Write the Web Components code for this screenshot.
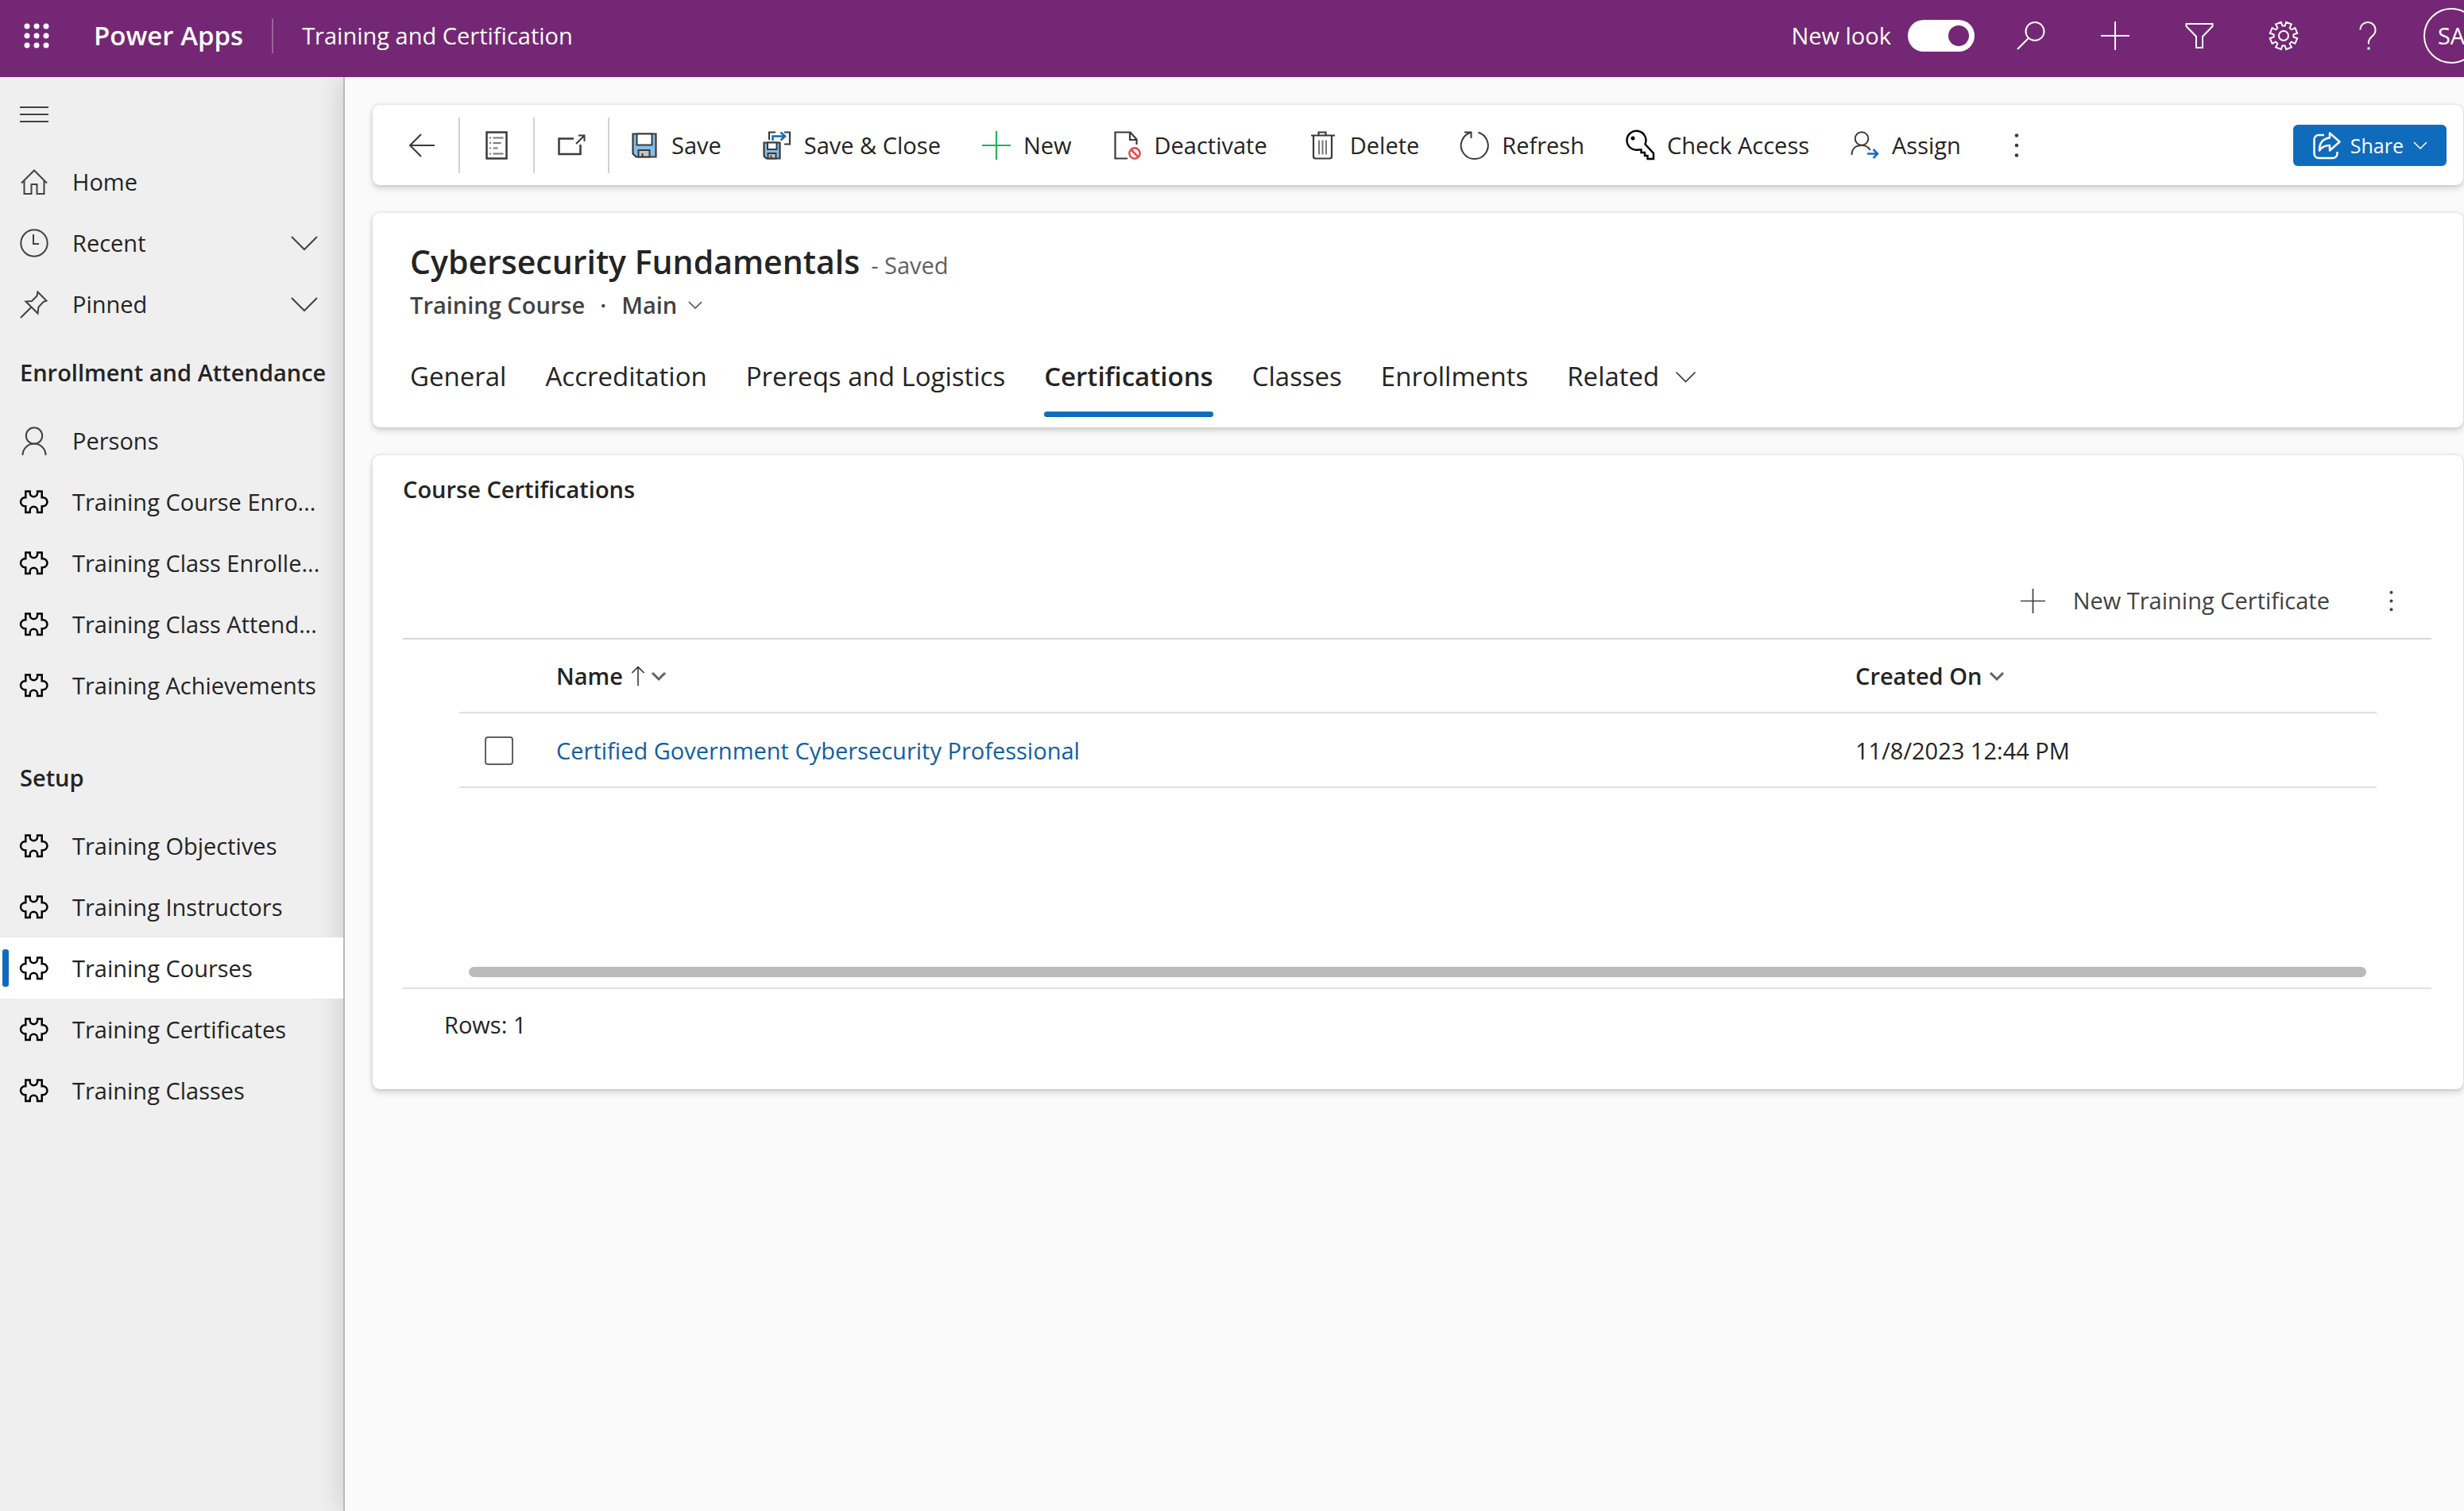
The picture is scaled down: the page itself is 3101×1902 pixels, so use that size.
<!DOCTYPE html>
<html lang="en">
<head>
<meta charset="utf-8">
<title>Training and Certification - Power Apps</title>
<style>
    :root {
        --brand: #742774;
        --primary: #0f6cbd;
        --link: #115ea3;
        --text: #242424;
        --text-soft: #424242;
        --text-muted: #616161;
        --line: #e0e0e0;
        --size-s: 25px;
        --size-m: 29px;
        --size-l: 33px;
        --size-xl: 41px;
    }
    body {
        margin: 0;
        background: #fafafa;
        color: var(--text);
        font: var(--size-m)/42px "Segoe UI", "Open Sans", "Noto Sans", sans-serif;
    }
</style>
</head>
<body>
<app-shell>
    <app-header slot="header" product="Power Apps" app="Training and Certification"></app-header>

    <side-nav slot="nav">
        <nav-item icon="home">Home</nav-item>
        <nav-item icon="clock" expandable>Recent</nav-item>
        <nav-item icon="pin" expandable>Pinned</nav-item>
        <nav-group heading="Enrollment and Attendance">
            <nav-item icon="person">Persons</nav-item>
            <nav-item icon="puzzle">Training Course Enro...</nav-item>
            <nav-item icon="puzzle">Training Class Enrolle...</nav-item>
            <nav-item icon="puzzle">Training Class Attend...</nav-item>
            <nav-item icon="puzzle">Training Achievements</nav-item>
        </nav-group>
        <nav-group heading="Setup">
            <nav-item icon="puzzle">Training Objectives</nav-item>
            <nav-item icon="puzzle">Training Instructors</nav-item>
            <nav-item icon="puzzle" active>Training Courses</nav-item>
            <nav-item icon="puzzle">Training Certificates</nav-item>
            <nav-item icon="puzzle">Training Classes</nav-item>
        </nav-group>
    </side-nav>

    <app-card>
        <command-bar>
            <command-button icon="back" label="Back" compact></command-button>
            <command-button icon="form" label="Open record set" compact></command-button>
            <command-button icon="popout" label="Open in new window" compact></command-button>
            <command-button icon="save">Save</command-button>
            <command-button icon="saveclose">Save &amp; Close</command-button>
            <command-button icon="add">New</command-button>
            <command-button icon="deactivate">Deactivate</command-button>
            <command-button icon="trash">Delete</command-button>
            <command-button icon="refresh">Refresh</command-button>
            <command-button icon="key">Check Access</command-button>
            <command-button icon="assign">Assign</command-button>
            <command-button icon="more" label="More commands"></command-button>
            <share-button slot="end">Share</share-button>
        </command-bar>
    </app-card>

    <app-card>
        <record-header name="Cybersecurity Fundamentals" status="- Saved" entity="Training Course" form="Main">
            <record-tab>General</record-tab>
            <record-tab>Accreditation</record-tab>
            <record-tab>Prereqs and Logistics</record-tab>
            <record-tab selected>Certifications</record-tab>
            <record-tab>Classes</record-tab>
            <record-tab>Enrollments</record-tab>
            <record-tab menu>Related</record-tab>
        </record-header>
    </app-card>

    <app-card>
        <sub-grid heading="Course Certifications" action="New Training Certificate"></sub-grid>
    </app-card>
</app-shell>

<script>
// outline of the settings gear, 8 teeth with a gap at the top
function gearPath() {
    const pts = [];
    for (let i = 0; i < 8; i++) {
        const a = i * 45 + 22.5;
        [[-15, 12.5], [-12, 17.5], [12, 17.5], [15, 12.5]].forEach(([d, r]) => {
            const t = (a + d) * Math.PI / 180;
            pts.push((18 + r * Math.sin(t)).toFixed(1) + ' ' + (18 - r * Math.cos(t)).toFixed(1));
        });
    }
    return 'M' + pts.join('L') + 'Z';
}

// all icons share a 36 x 36 box
const ICONS = {
    waffle: [6, 18, 30].map(y => [6, 18, 30].map(x => `<circle cx="${x}" cy="${y}" r="3.5" fill="currentColor" stroke="none"/>`).join('')).join(''),
    menu: '<path d="M0 9h36M0 18h36M0 27h36"/>',
    home: '<path d="M2 19.5 18 3.5l16 16M5.5 16.5V33h9V21h7v12h9V16.5"/>',
    clock: '<circle cx="18" cy="18" r="16.7"/><path d="M17 7v12h7"/>',
    pin: '<path d="M22.5 2.5 33.5 13.5l-4 1.5-6 6.5-1 8-15-15 7.5-.5 6.5-6.5zM14 22 1 35"/>',
    person: '<circle cx="18" cy="11.5" r="10.2"/><path d="M3.5 36a14.5 14.5 0 0 1 29 0"/>',
    puzzle: '<path stroke="#000" stroke-width="2.5" d="M7.3 4.5H12.7V6.5a4.7 4.7 0 0 0 9.4 0V4.5H27.7V12.2H29a5.5 5.5 0 0 1 0 11H27.7V31H22.1V28.5a4.7 4.7 0 0 0-9.4 0V31H7.3V23.2H6.5a5.5 5.5 0 0 1 0-11H7.3Z"/>',
    chevron: '<path d="M2 10l16 16 16-16"/>',
    search: '<circle cx="23" cy="12.5" r="11.5"/><path d="M15 21 1 35"/>',
    plus: '<path d="M18 0v36M0 18h36"/>',
    filter: '<path d="M1.5 3h33v3L22 19v14h-8V19L1.5 6z"/>',
    gear: `<path d="${gearPath()}"/><circle cx="18" cy="18" r="6"/>`,
    help: '<path d="M8.5 10.5a9.5 9.5 0 1 1 16.5 6.5c-3 3-6 5-6 9v2.5"/><path d="M17.5 34h3" stroke-width="3"/>',
    back: '<path d="M17 4 3 18l14 14M3 18h31"/>',
    form: '<path stroke-width="2.5" d="M5.5 1.5h25v33h-25z"/><path stroke="#777" d="M9 8.5h2M13.5 8.5h13M9 15h2M13.5 15h10M9 21.5h2M13.5 21.5h6M9 28.5h2M13.5 28.5h13"/>',
    popout: '<path stroke-width="2.5" d="M21 9.5H2.5V29h27V17"/><path d="M24 16 34 6M27 5.5h7.5V13"/>',
    save: '<path fill="#83beec" stroke-width="2.2" d="M3.5 3.5h29v29H7.5l-4-4z"/><path fill="#fff" d="M8.5 3.5h19v14h-19z"/><path fill="#c8c6c4" d="M10.5 24h14v8.5h-14z"/><path d="M15.5 28v5"/>',
    saveclose: '<path stroke-width="2.2" d="M8 11V1.5h8M27 1.5h7v15h-7"/><path stroke="#0f6cbd" stroke-width="2.5" d="M12.5 12V6.5H27M22.5 1.5l5.5 5-5.5 5"/><path fill="#83beec" stroke-width="2.2" d="M1.5 14.5h20v20h-17l-3-3z"/><path fill="#fff" d="M6 14.5h11.5V23H6z"/><path fill="#c8c6c4" d="M6.5 28h10v6.5h-10z"/><path d="M10.5 30.5v4"/>',
    add: '<path stroke="#27ae60" stroke-width="2.2" d="M18 0v36M0 18h36"/>',
    deactivate: '<path stroke-width="2.2" d="M18 34.5H2.5v-33h19l8 9V17M21 1.5v9.5h9"/><circle cx="27" cy="28" r="6.7" stroke="#e8484c" stroke-width="2.5"/><path stroke="#e8484c" stroke-width="2.5" d="M22.5 23.5l9 9"/>',
    trash: '<path stroke-width="2.2" d="M3 5.5h30M12.5 5V1.5h9V5M6 6v26a2.5 2.5 0 0 0 2.5 2.5h18A2.5 2.5 0 0 0 29 32V6"/><path stroke="#777" d="M13 11.5v18M17.5 11.5v18M22 11.5v18"/>',
    refresh: '<path d="M22.5 1.8A17 17 0 1 1 13 1.8M5 1.5h8.5V9"/>',
    key: '<path stroke="#000" stroke-width="2.4" d="M24.5 16.5a12 12 0 1 0-8.5 7h3.5V27H24v4h3.500v4H35v-7z"/><circle cx="9" cy="9" r="2.5" fill="#000" stroke="none"/>',
    assign: '<circle cx="14" cy="9.5" r="8.3"/><path d="M1.5 30c0-8 5-12 12.5-12 5 0 8.5 2 10.5 6"/><path stroke="#0f6cbd" stroke-width="2.5" d="M21 28.5h13M28.5 23l5.5 5.5-5.5 5.5"/>',
    more: '<g fill="currentColor" stroke="none"><circle cx="18" cy="5.5" r="2.3"/><circle cx="18" cy="18" r="2.3"/><circle cx="18" cy="30.5" r="2.3"/></g>',
    share: '<path stroke-width="2.5" d="M15 5H8a5.5 5.5 0 0 0-5.5 5.5v18A5.5 5.5 0 0 0 8 34h18a5.5 5.5 0 0 0 5.5-5.5V26"/><path stroke-width="2.5" stroke-linejoin="round" d="M22 2.5 34.5 13.5 22 24.5V18c-6 0-10 2-13 6.5 0-9 4-15 13-16z"/>',
    sortup: '<path d="M18 2v33M7.5 12.5 18 2l10.5 10.5"/>'
};

class AppIcon extends HTMLElement {
    constructor() {
        super();
        this.attachShadow({ mode: 'open' });
    }
    connectedCallback() {
        this.shadowRoot.innerHTML = `
            <style>
                :host { display: block; flex: none; width: 36px; height: 36px; }
                svg { display: block; width: 100%; height: 100%; overflow: visible; }
            </style>
            <svg viewBox="0 0 36 36" fill="none" stroke="currentColor" stroke-width="${this.getAttribute('weight') || 2}" aria-hidden="true">${ICONS[this.getAttribute('name')]}</svg>
        `;
    }
}

class AppShell extends HTMLElement {
    constructor() {
        super();
        this.attachShadow({ mode: 'open' });
        this.shadowRoot.innerHTML = `
            <style>
                :host { display: flex; flex-direction: column; min-height: 100vh; overflow: hidden; }
                .body { flex: 1; display: flex; }
                main {
                    flex: 1;
                    min-width: 0;
                    display: flex;
                    flex-direction: column;
                    gap: 35px;
                    padding: 35px 1px 35px 35px;
                    background: #fafafa;
                    border-left: 2px solid #b8b8b8;
                    box-shadow: -3px 0 30px rgba(0, 0, 0, 0.14);
                }
            </style>
            <slot name="header"></slot>
            <div class="body">
                <slot name="nav"></slot>
                <main><slot></slot></main>
            </div>
        `;
    }
}

class AppHeader extends HTMLElement {
    constructor() {
        super();
        this.attachShadow({ mode: 'open' });
    }
    connectedCallback() {
        this.shadowRoot.innerHTML = `
            <style>
                :host { display: block; position: relative; z-index: 1; background: var(--brand); color: #fff; overflow: hidden; }
                header { display: flex; align-items: center; height: 89px; padding: 0 0 8px 28px; }
                button { display: block; padding: 0; border: 0; background: none; color: inherit; font: inherit; }
                .product { margin-left: 54px; font-size: var(--size-l); font-weight: 600; }
                .rule { width: 2px; height: 44px; margin: 0 36px; background: #9a639a; }
                .actions { display: flex; align-items: center; gap: 70px; margin-left: auto; }
                label { display: flex; align-items: center; gap: 21px; margin-right: -17px; }
                input {
                    appearance: none;
                    display: flex;
                    align-items: center;
                    justify-content: flex-end;
                    width: 84px;
                    height: 40px;
                    margin: 0;
                    padding-right: 7px;
                    box-sizing: border-box;
                    border-radius: 20px;
                    background: #fff;
                }
                input::before { content: ""; width: 26px; height: 26px; border-radius: 50%; background: var(--brand); }
                .avatar {
                    width: 70px;
                    height: 70px;
                    margin: 0 -19px 0 -18px;
                    box-sizing: border-box;
                    border: 2px solid #fff;
                    border-radius: 50%;
                }
            </style>
            <header>
                <button aria-label="App launcher"><app-icon name="waffle"></app-icon></button>
                <span class="product">${this.getAttribute('product')}</span>
                <span class="rule"></span>
                <span>${this.getAttribute('app')}</span>
                <div class="actions">
                    <label>New look <input type="checkbox" role="switch" checked></label>
                    <button aria-label="Search"><app-icon name="search"></app-icon></button>
                    <button aria-label="Quick create"><app-icon name="plus"></app-icon></button>
                    <button aria-label="Filter"><app-icon name="filter"></app-icon></button>
                    <button aria-label="Settings"><app-icon name="gear"></app-icon></button>
                    <button aria-label="Help"><app-icon name="help"></app-icon></button>
                    <button class="avatar">SA</button>
                </div>
            </header>
        `;
    }
}

class SideNav extends HTMLElement {
    constructor() {
        super();
        this.attachShadow({ mode: 'open' });
        this.shadowRoot.innerHTML = `
            <style>
                :host { display: block; flex: none; width: 432px; background: #efefef; }
                .toggle { display: flex; align-items: center; height: 93px; padding: 0 0 0 25px; border: 0; background: none; color: var(--text-soft); }
            </style>
            <nav aria-label="Site map">
                <button class="toggle" aria-label="Collapse site map"><app-icon name="menu"></app-icon></button>
                <slot></slot>
            </nav>
        `;
    }
}

class NavGroup extends HTMLElement {
    constructor() {
        super();
        this.attachShadow({ mode: 'open' });
    }
    connectedCallback() {
        this.shadowRoot.innerHTML = `
            <style>
                :host { display: block; margin-bottom: 30px; }
                h2 { margin: 0; padding-left: 25px; font-size: inherit; font-weight: 600; line-height: 95px; white-space: nowrap; }
            </style>
            <h2>${this.getAttribute('heading')}</h2>
            <slot></slot>
        `;
    }
}

class NavItem extends HTMLElement {
    constructor() {
        super();
        this.attachShadow({ mode: 'open' });
    }
    connectedCallback() {
        const expandable = this.hasAttribute('expandable');
        this.shadowRoot.innerHTML = `
            <style>
                :host { display: block; }
                a {
                    position: relative;
                    display: flex;
                    align-items: center;
                    gap: 30px;
                    height: 77px;
                    padding: 0 31px 0 25px;
                    color: inherit;
                    text-decoration: none;
                    white-space: nowrap;
                }
                app-icon { color: var(--text-soft); }
                .chevron { margin-left: auto; }
                :host([active]) a { background: #fff; }
                :host([active]) a::before {
                    content: "";
                    position: absolute;
                    left: 3px;
                    width: 8px;
                    height: 47px;
                    border-radius: 3px;
                    background: var(--primary);
                }
            </style>
            <a href="#"><app-icon name="${this.getAttribute('icon')}"></app-icon><slot></slot>
            ${expandable ? '<app-icon class="chevron" name="chevron"></app-icon>' : ''}</a>
        `;
    }
}

class AppCard extends HTMLElement {
    constructor() {
        super();
        this.attachShadow({ mode: 'open' });
        this.shadowRoot.innerHTML = `
            <style>
                :host {
                    display: block;
                    background: #fff;
                    border-radius: 9px;
                    box-shadow: 0 0 4px rgba(0, 0, 0, 0.12), 0 4px 9px rgba(0, 0, 0, 0.16);
                }
            </style>
            <slot></slot>
        `;
    }
}

class CommandBar extends HTMLElement {
    constructor() {
        super();
        this.attachShadow({ mode: 'open' });
        this.shadowRoot.innerHTML = `
            <style>
                :host { display: flex; align-items: center; height: 101px; padding: 0 21px 0 16px; }
                .end { margin-left: auto; }
            </style>
            <slot></slot>
            <div class="end"><slot name="end"></slot></div>
        `;
    }
}

class CommandButton extends HTMLElement {
    constructor() {
        super();
        this.attachShadow({ mode: 'open' });
    }
    connectedCallback() {
        const label = this.getAttribute('label');
        this.shadowRoot.innerHTML = `
            <style>
                :host { display: block; }
                :host([compact]) { border-right: 2px solid #d1d1d1; }
                button {
                    display: flex;
                    align-items: center;
                    gap: 16px;
                    height: 70px;
                    padding: 0 26px;
                    border: 0;
                    background: none;
                    color: var(--text);
                    font: inherit;
                    white-space: nowrap;
                }
                :host([compact]) button { padding: 0 28px; }
                app-icon { color: #3b3a39; }
            </style>
            <button ${label ? `aria-label="${label}"` : ''}><app-icon name="${this.getAttribute('icon')}"></app-icon>${label ? '' : '<slot></slot>'}</button>
        `;
    }
}

class ShareButton extends HTMLElement {
    constructor() {
        super();
        this.attachShadow({ mode: 'open' });
        this.shadowRoot.innerHTML = `
            <style>
                button {
                    display: flex;
                    align-items: center;
                    gap: 12px;
                    height: 52px;
                    padding: 0 24px;
                    border: 0;
                    border-radius: 6px;
                    background: var(--primary);
                    color: #fff;
                    font: inherit;
                    font-size: var(--size-s);
                }
                .chevron { width: 18px; height: 18px; }
            </style>
            <button><app-icon name="share"></app-icon><slot></slot><app-icon class="chevron" name="chevron" weight="3"></app-icon></button>
        `;
    }
}

class RecordHeader extends HTMLElement {
    constructor() {
        super();
        this.attachShadow({ mode: 'open' });
    }
    connectedCallback() {
        this.shadowRoot.innerHTML = `
            <style>
                :host { display: block; padding: 31px 47px 13px; }
                .title { display: flex; align-items: baseline; gap: 14px; }
                h1 { margin: 0; font-size: var(--size-xl); font-weight: 600; line-height: 60px; }
                .status { color: var(--text-muted); }
                .sub { display: flex; align-items: center; gap: 19px; margin-top: 4px; color: var(--text-soft); font-weight: 600; }
                .sub button { display: flex; align-items: center; gap: 14px; padding: 0; border: 0; background: none; color: inherit; font: inherit; }
                .sub app-icon { width: 18px; height: 18px; }
                .tabs { display: flex; gap: 49px; margin-top: 45px; }
            </style>
            <div class="title">
                <h1>${this.getAttribute('name')}</h1>
                <span class="status">${this.getAttribute('status')}</span>
            </div>
            <div class="sub">
                <span>${this.getAttribute('entity')}</span>
                <span>·</span>
                <button>${this.getAttribute('form')} <app-icon name="chevron" weight="3"></app-icon></button>
            </div>
            <div class="tabs" role="tablist"><slot></slot></div>
        `;
    }
}

class RecordTab extends HTMLElement {
    constructor() {
        super();
        this.attachShadow({ mode: 'open' });
    }
    connectedCallback() {
        const selected = this.hasAttribute('selected');
        this.shadowRoot.innerHTML = `
            <style>
                button {
                    display: flex;
                    align-items: center;
                    gap: 20px;
                    padding: 0;
                    border: 0;
                    background: none;
                    color: inherit;
                    font: inherit;
                    font-size: var(--size-l);
                    line-height: 48px;
                    white-space: nowrap;
                }
                app-icon { width: 27px; height: 27px; }
                .bar { height: 7px; margin-top: 20px; border-radius: 4px; }
                :host([selected]) button { font-weight: 600; }
                :host([selected]) .bar { background: var(--primary); }
            </style>
            <button role="tab" aria-selected="${selected}"><slot></slot>${this.hasAttribute('menu') ? '<app-icon name="chevron"></app-icon>' : ''}</button>
            <div class="bar"></div>
        `;
    }
}

class SubGrid extends HTMLElement {
    constructor() {
        super();
        this.attachShadow({ mode: 'open' });
    }
    connectedCallback() {
        this.shadowRoot.innerHTML = `
            <style>
                :host { display: block; padding: 22px 40px 0 38px; }
                h2 { margin: 0; font-size: inherit; font-weight: 600; }
                button { display: flex; align-items: center; padding: 0; border: 0; background: none; color: inherit; font: inherit; }
                .tools { display: flex; align-items: center; justify-content: flex-end; height: 94px; margin-top: 72px; padding-right: 35px; gap: 62px; color: var(--text-soft); border-bottom: 2px solid #d6d6d6; }
                .tools .new { gap: 35px; }
                .tools app-icon { width: 31px; height: 31px; }
                .grid { min-height: 412px; padding: 0 69px 0 71px; }
                table { width: 100%; table-layout: fixed; border-collapse: collapse; }
                th, td { height: 92px; padding: 0 0 0 24px; box-sizing: border-box; border-bottom: 2px solid var(--line); text-align: left; }
                td { height: 94px; padding-top: 2px; }
                th { font-weight: 600; }
                .check { width: 98px; padding-left: 32px; }
                .date { width: 680px; }
                th button { gap: 10px; }
                th app-icon { width: 18px; height: 18px; color: var(--text-muted); }
                th app-icon.sort { width: 26px; height: 26px; margin: 0 -6px 0 -4px; color: var(--text); }
                input { appearance: none; display: block; width: 36px; height: 36px; margin: 0; box-sizing: border-box; border: 2px solid var(--text-muted); border-radius: 4px; }
                a { color: var(--link); text-decoration: none; }
                .scroll { height: 13px; margin: 0 82px 13px 83px; border-radius: 7px; background: #bababa; }
                .footer { padding: 24px 52px 60px; border-top: 2px solid var(--line); }
            </style>
            <h2>${this.getAttribute('heading')}</h2>
            <div class="tools">
                <button class="new"><app-icon name="plus"></app-icon>${this.getAttribute('action')}</button>
                <button aria-label="More commands"><app-icon name="more"></app-icon></button>
            </div>
            <div class="grid">
                <table>
                    <thead>
                        <tr>
                            <th class="check"></th>
                            <th><button>Name <app-icon class="sort" name="sortup" weight="2"></app-icon><app-icon name="chevron" weight="6"></app-icon></button></th>
                            <th class="date"><button>Created On <app-icon name="chevron" weight="6"></app-icon></button></th>
                        </tr>
                    </thead>
                    <tbody>
                        <tr>
                            <td class="check"><input type="checkbox" aria-label="Select row"></td>
                            <td><a href="#">Certified Government Cybersecurity Professional</a></td>
                            <td>11/8/2023 12:44 PM</td>
                        </tr>
                    </tbody>
                </table>
            </div>
            <div class="scroll"></div>
            <div class="footer">Rows: 1</div>
        `;
    }
}

customElements.define('app-icon', AppIcon);
customElements.define('app-shell', AppShell);
customElements.define('app-header', AppHeader);
customElements.define('side-nav', SideNav);
customElements.define('nav-group', NavGroup);
customElements.define('nav-item', NavItem);
customElements.define('app-card', AppCard);
customElements.define('command-bar', CommandBar);
customElements.define('command-button', CommandButton);
customElements.define('share-button', ShareButton);
customElements.define('record-header', RecordHeader);
customElements.define('record-tab', RecordTab);
customElements.define('sub-grid', SubGrid);
</script>
</body>
</html>
